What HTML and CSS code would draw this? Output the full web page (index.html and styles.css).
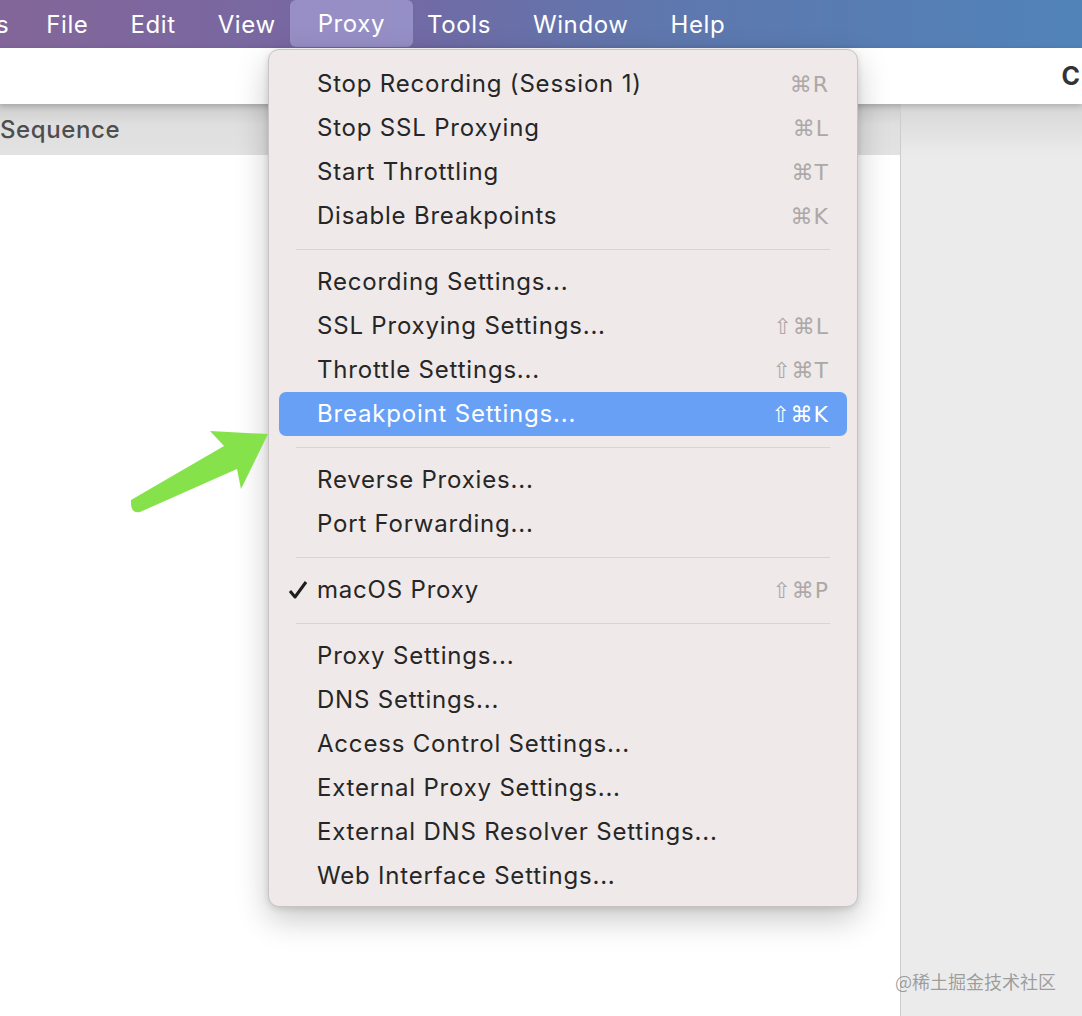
FILE: index.html
```html
<!DOCTYPE html>
<html lang="en">

<head>
    <meta charset="UTF-8">
    <meta name="viewport" content="width=device-width, initial-scale=1.0">
    <title>Charles - Proxy menu</title>
    <link rel="stylesheet" href="styles.css">
</head>

<body>
    <!-- Menu bar -->
    <div class="menubar">
        <span class="menubar-item app">s</span>
        <span class="menubar-item">File</span>
        <span class="menubar-item">Edit</span>
        <span class="menubar-item">View</span>
        <span class="menubar-item active">Proxy</span>
        <span class="menubar-item">Tools</span>
        <span class="menubar-item">Window</span>
        <span class="menubar-item">Help</span>
    </div>

    <!-- Window -->
    <div class="window">
        <div class="toolbar"><span class="toolbar-title">C</span></div>
        <div class="panes">
            <div class="pane-left">
                <div class="pane-header">Sequence</div>
                <div class="pane-body"></div>
            </div>
            <div class="pane-right">
                <div class="pane-header"></div>
            </div>
        </div>
    </div>

    <!-- Proxy dropdown -->
    <div class="menu">
        <div class="menu-item"><span class="label">Stop Recording (Session 1)</span><span class="keys">⌘R</span></div>
        <div class="menu-item"><span class="label">Stop SSL Proxying</span><span class="keys">⌘L</span></div>
        <div class="menu-item"><span class="label">Start Throttling</span><span class="keys">⌘T</span></div>
        <div class="menu-item"><span class="label">Disable Breakpoints</span><span class="keys">⌘K</span></div>
        <div class="menu-sep"></div>
        <div class="menu-item"><span class="label">Recording Settings...</span></div>
        <div class="menu-item"><span class="label">SSL Proxying Settings...</span><span class="keys">⇧⌘L</span></div>
        <div class="menu-item"><span class="label">Throttle Settings...</span><span class="keys">⇧⌘T</span></div>
        <div class="menu-item selected"><span class="label">Breakpoint Settings...</span><span class="keys">⇧⌘K</span></div>
        <div class="menu-sep"></div>
        <div class="menu-item"><span class="label">Reverse Proxies...</span></div>
        <div class="menu-item"><span class="label">Port Forwarding...</span></div>
        <div class="menu-sep"></div>
        <div class="menu-item checked">
            <svg class="check" width="20" height="20" viewBox="0 0 20 20">
                <path d="M2 11 L7 17 L18 2" fill="none" stroke="#1e1e1e" stroke-width="3" stroke-linejoin="round" />
            </svg>
            <span class="label">macOS Proxy</span><span class="keys">⇧⌘P</span>
        </div>
        <div class="menu-sep"></div>
        <div class="menu-item"><span class="label">Proxy Settings...</span></div>
        <div class="menu-item"><span class="label">DNS Settings...</span></div>
        <div class="menu-item"><span class="label">Access Control Settings...</span></div>
        <div class="menu-item"><span class="label">External Proxy Settings...</span></div>
        <div class="menu-item"><span class="label">External DNS Resolver Settings...</span></div>
        <div class="menu-item"><span class="label">Web Interface Settings...</span></div>
    </div>

    <!-- Green arrow annotation -->
    <svg class="arrow" width="150" height="90" viewBox="128 426 150 90">
        <path d="M131 500 L224 446 L210 431 L268 434 L241 489 L237 469 L140 512 Q130 514 131 500 Z" fill="#86e24b" />
    </svg>

    <div class="watermark">@稀土掘金技术社区</div>
</body>

</html>
```

FILE: styles.css
```css
body {
    margin: 0;
    width: 1082px;
    height: 1016px;
    overflow: hidden;
    position: relative;
    font-family: Inter, "Liberation Sans", Arial, sans-serif;
    background: #fff;
}

/* Menu bar */
.menubar {
    height: 48px;
    display: flex;
    align-items: stretch;
    background: linear-gradient(to right, #836699, #7468a4 35%, #5f77ad 60%, #5083b9);
    color: #fff;
    font-size: 24px;
    letter-spacing: 0.6px;
}

.menubar-item {
    display: flex;
    align-items: center;
    padding: 0 21px;
}

.menubar-item.app {
    margin-left: -25px;
    padding-right: 16px;
}

.menubar-item.active {
    padding: 0 28px;
    margin: 0 -7px;
    height: 47px;
    border-radius: 6px;
    background: rgba(190, 190, 240, 0.45);
}

/* Window */
.toolbar {
    height: 56px;
    background: #fff;
    display: flex;
    align-items: center;
    justify-content: flex-end;
    position: relative;
    z-index: 2;
    box-shadow: 0 2px 6px rgba(0, 0, 0, 0.2);
}

.toolbar-title {
    font-size: 25px;
    font-weight: bold;
    color: #333;
    margin-right: 2px;
}

.panes {
    display: flex;
    height: 912px;
}

.pane-left {
    width: 900px;
    background: #fff;
}

.pane-right {
    flex: 1;
    background: #ebebeb;
    border-left: 1px solid #cdcdcd;
}

.pane-header {
    height: 51px;
    display: flex;
    align-items: center;
    font-size: 24px;
    font-weight: 500;
    letter-spacing: 0.6px;
    color: #4e4e4e;
    background: linear-gradient(to bottom, #cbcbcb, #dfdfdf 40%, #e2e2e2);
}

.pane-right .pane-header {
    background: linear-gradient(to bottom, #d6d6d6, #ebebeb);
}

/* Dropdown */
.menu {
    position: absolute;
    left: 268px;
    top: 49px;
    width: 588px;
    padding: 12px 0 8px;
    background: #efe9e9;
    border: 1px solid #c9c4c4;
    border-radius: 11px;
    box-shadow: 0 12px 32px rgba(0, 0, 0, 0.22), 0 2px 6px rgba(0, 0, 0, 0.12);
    z-index: 5;
}

.menu-item {
    height: 44px;
    margin: 0 10px;
    padding: 0 18px 0 38px;
    display: flex;
    align-items: center;
    border-radius: 7px;
    font-size: 24px;
    letter-spacing: 0.8px;
    color: #262626;
    position: relative;
}

.menu-item .label {
    flex: 1;
    margin-top: -2px;
}

.menu-item .keys {
    font-family: "DejaVu Sans", sans-serif;
    font-size: 22px;
    color: #ada8a8;
    letter-spacing: 1px;
}

.menu-item .check {
    position: absolute;
    left: 9px;
    top: 12px;
}

.menu-item.selected {
    background: #68a0f6;
    color: #fff;
}

.menu-item.selected .keys {
    color: #fff;
}

.menu-sep {
    height: 22px;
    margin: 0 27px;
    display: flex;
    align-items: center;
}

.menu-sep::after {
    content: "";
    flex: 1;
    height: 1px;
    background: #d9d3d3;
}

/* Annotation */
.arrow {
    position: absolute;
    left: 128px;
    top: 426px;
    z-index: 6;
}

.watermark {
    position: absolute;
    left: 895px;
    top: 968px;
    font-family: "Noto Sans CJK SC", sans-serif;
    font-size: 18px;
    color: rgba(90, 90, 90, 0.55);
    z-index: 7;
}
```
